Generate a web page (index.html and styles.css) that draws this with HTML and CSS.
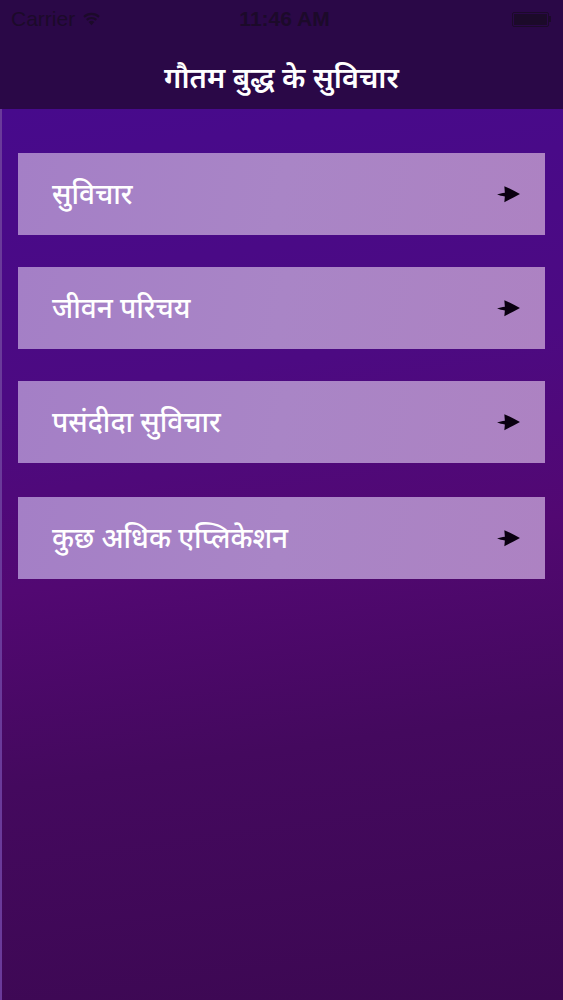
FILE: index.html
```html
<!DOCTYPE html>
<html lang="hi">
<head>
<meta charset="utf-8">
<link rel="stylesheet" href="styles.css">
</head>
<body>
<div class="screen">
  <header class="top">
    <div class="status">
      <div class="status-left">
        <span>Carrier</span>
        <svg class="wifi" width="19" height="14" viewBox="0 0 18 13"><path d="M9 12.5 L6.3 9.4 A4 4 0 0 1 11.7 9.4 Z" fill="#1c0a2a"/><path d="M3.8 6.6 A7.5 7.5 0 0 1 14.2 6.6 L12.9 8.1 A5.5 5.5 0 0 0 5.1 8.1 Z" fill="#1c0a2a"/><path d="M1.2 3.7 A11.5 11.5 0 0 1 16.8 3.7 L15.5 5.2 A9.5 9.5 0 0 0 2.5 5.2 Z" fill="#1c0a2a"/></svg>
      </div>
      <div class="status-time">11:46 AM</div>
      <div class="status-right"><div class="battery"><div class="battery-fill"></div></div><div class="battery-tip"></div></div>
    </div>
    <h1 class="title">गौतम बुद्ध के सुविचार</h1>
  </header>
  <main class="content">
    <a class="item"><span>सुविचार</span><svg class="arrow" width="25" height="22" viewBox="0 0 24 20"><path d="M1 10.5 C3 9.8 6 9.2 8.5 8.8 L8 2.5 C13 4.5 18 7.5 23 10 C18 12.5 13 15.5 8 17.8 L8.5 12.3 C6 12 3 11.3 1 10.5 Z" fill="#0a0010"/></svg></a>
    <a class="item"><span>जीवन परिचय</span><svg class="arrow" width="25" height="22" viewBox="0 0 24 20"><path d="M1 10.5 C3 9.8 6 9.2 8.5 8.8 L8 2.5 C13 4.5 18 7.5 23 10 C18 12.5 13 15.5 8 17.8 L8.5 12.3 C6 12 3 11.3 1 10.5 Z" fill="#0a0010"/></svg></a>
    <a class="item"><span>पसंदीदा सुविचार</span><svg class="arrow" width="25" height="22" viewBox="0 0 24 20"><path d="M1 10.5 C3 9.8 6 9.2 8.5 8.8 L8 2.5 C13 4.5 18 7.5 23 10 C18 12.5 13 15.5 8 17.8 L8.5 12.3 C6 12 3 11.3 1 10.5 Z" fill="#0a0010"/></svg></a>
    <a class="item item-last"><span>कुछ अधिक एप्लिकेशन</span><svg class="arrow" width="25" height="22" viewBox="0 0 24 20"><path d="M1 10.5 C3 9.8 6 9.2 8.5 8.8 L8 2.5 C13 4.5 18 7.5 23 10 C18 12.5 13 15.5 8 17.8 L8.5 12.3 C6 12 3 11.3 1 10.5 Z" fill="#0a0010"/></svg></a>
  </main>
</div>
</body>
</html>
```
FILE: styles.css
```css
html, body {
  margin: 0;
  padding: 0;
  background: #1a0628;
}
.screen {
  width: 563px;
  height: 1000px;
  display: flex;
  flex-direction: column;
  font-family: "Noto Sans", "Liberation Sans", sans-serif;
  overflow: hidden;
}
.top {
  background: #2a0847;
  height: 109px;
  display: flex;
  flex-direction: column;
  flex-shrink: 0;
}
.status {
  height: 38px;
  display: flex;
  align-items: center;
  justify-content: space-between;
  padding: 0 12px 0 11px;
  color: #1c0a2a;
  font-family: "Liberation Sans", sans-serif;
  font-size: 21px;
  position: relative;
}
.status-left {
  display: flex;
  align-items: center;
  gap: 7px;
  width: 120px;
}
.status-time {
  position: absolute;
  left: 0;
  right: 0;
  text-align: center;
  font-weight: bold;
  padding-left: 6px;
}
.status-right {
  display: flex;
  align-items: center;
  width: 120px;
  justify-content: flex-end;
}
.battery {
  width: 37px;
  height: 15px;
  border: 1px solid #1c0a2a;
  border-radius: 2px;
  padding: 1px;
  box-sizing: border-box;
}
.battery-fill {
  width: 100%;
  height: 100%;
  background: #1c0a2a;
}
.battery-tip {
  width: 2px;
  height: 6px;
  background: #1c0a2a;
}
.title {
  margin: 0;
  flex: 1;
  display: flex;
  align-items: center;
  justify-content: center;
  padding-top: 6px;
  color: #ffffff;
  font-size: 29px;
  font-weight: 600;
}
.content {
  flex: 1;
  background: linear-gradient(172deg, #470a8c 0%, #4c0a82 30%, #520872 50%, #44095e 70%, #3c0852 100%);
  border-left: 2px solid #6a3a9a;
  padding: 44px 18px 0 16px;
  display: flex;
  flex-direction: column;
  gap: 32px;
}
.item {
  height: 82px;
  background: linear-gradient(100deg, #a47fc6 0%, #a985c6 50%, #ad82c2 100%);
  display: flex;
  align-items: center;
  justify-content: space-between;
  padding: 0 24px 0 34px;
  color: #ffffff;
  font-size: 28px;
  font-weight: 500;
}
.item-last {
  margin-top: 2px;
}
.item span {
  padding-bottom: 2px;
}
.arrow {
  display: block;
}
```
